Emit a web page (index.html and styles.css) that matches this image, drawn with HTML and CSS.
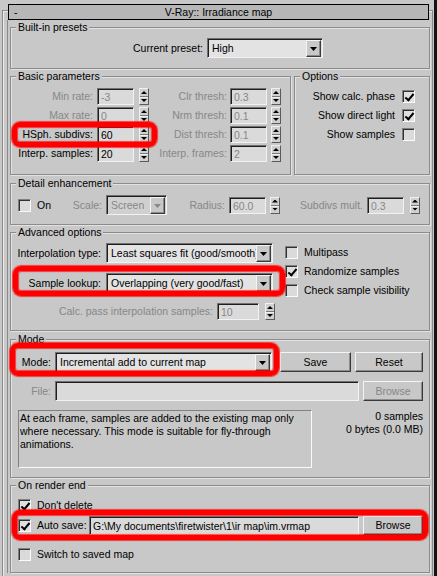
FILE: index.html
```html
<!DOCTYPE html>
<html lang="en">
<head>
<meta charset="utf-8">
<title>V-Ray:: Irradiance map</title>
<link rel="stylesheet" href="styles.css">
</head>
<body>
<div class="screen">
  <div class="outer">
    <div class="titlebar"><span class="minus">-</span><span class="title">V-Ray:: Irradiance map</span><span></span></div>
    <div class="rbody">

      <div class="group g1">
        <div class="legend">Built-in presets</div>
        <div class="row h20">
          <span class="lbl r w196">Current preset:</span>
          <div class="dd w116"><span class="dd-text">High</span><span class="dd-btn"></span></div>
        </div>
      </div>

      <div class="pair">
        <div class="group g2">
          <div class="legend">Basic parameters</div>
          <div class="row h19">
            <span class="lbl r l1 dis">Min rate:</span><span class="field dis">-3</span><span class="spin"></span>
            <span class="lbl r l2 dis">Clr thresh:</span><span class="field dis">0.3</span><span class="spin s4"></span>
          </div>
          <div class="row h19">
            <span class="lbl r l1 dis">Max rate:</span><span class="field dis">0</span><span class="spin"></span>
            <span class="lbl r l2 dis">Nrm thresh:</span><span class="field dis">0.1</span><span class="spin s4"></span>
          </div>
          <div class="row h19">
            <span class="lbl r l1">HSph. subdivs:</span><span class="field">60</span><span class="spin"></span>
            <span class="lbl r l2 dis">Dist thresh:</span><span class="field dis">0.1</span><span class="spin s4"></span>
          </div>
          <div class="row h19">
            <span class="lbl r l1">Interp. samples:</span><span class="field">20</span><span class="spin"></span>
            <span class="lbl r l2 dis">Interp. frames:</span><span class="field dis">2</span><span class="spin s4"></span>
          </div>
        </div>
        <div class="group opts">
          <div class="legend">Options</div>
          <div class="row h19 orow"><span class="lbl">Show calc. phase</span><span class="chk on"></span></div>
          <div class="row h19 orow"><span class="lbl">Show direct light</span><span class="chk on"></span></div>
          <div class="row h19 orow"><span class="lbl">Show samples</span><span class="chk light"></span></div>
        </div>
      </div>

      <div class="group g3">
        <div class="legend">Detail enhancement</div>
        <div class="row h20">
          <span class="chk ml7 light"></span><span class="lbl on-l">On</span>
          <span class="lbl r scale-l dis">Scale:</span>
          <div class="dd w61 off"><span class="dd-text">Screen</span><span class="dd-btn"></span></div>
          <span class="lbl r rad-l dis">Radius:</span><span class="field dis">60.0</span><span class="spin s4"></span>
          <span class="lbl r sub-l dis">Subdivs mult.</span><span class="field dis">0.3</span><span class="spin s6"></span>
        </div>
      </div>

      <div class="group g4">
        <div class="legend">Advanced options</div>
        <div class="adv-left">
          <div class="row h20">
            <span class="lbl r w95">Interpolation type:</span>
            <div class="dd w167"><span class="dd-text">Least squares fit (good/smooth)</span><span class="dd-btn"></span></div>
          </div>
          <div class="row h20 mt10">
            <span class="lbl r w95">Sample lookup:</span>
            <div class="dd w167"><span class="dd-text">Overlapping (very good/fast)</span><span class="dd-btn"></span></div>
          </div>
          <div class="row h17 mt10">
            <span class="lbl r w206 dis">Calc. pass interpolation samples:</span><span class="field w42 dis">10</span><span class="spin s6"></span>
          </div>
        </div>
        <div class="adv-right">
          <div class="row h19"><span class="chk light"></span><span class="lbl ml6">Multipass</span></div>
          <div class="row h19"><span class="chk on"></span><span class="lbl ml6">Randomize samples</span></div>
          <div class="row h19"><span class="chk light"></span><span class="lbl ml6">Check sample visibility</span></div>
        </div>
      </div>

      <div class="group g5">
        <div class="legend">Mode</div>
        <div class="row h20">
          <span class="lbl r w44">Mode:</span>
          <div class="dd w217"><span class="dd-text">Incremental add to current map</span><span class="dd-btn"></span></div>
          <span class="btn w71 ml8">Save</span>
          <span class="btn w68 ml4">Reset</span>
        </div>
        <div class="row h20 mt9">
          <span class="lbl r w44 dis">File:</span>
          <span class="field h20f w304"></span>
          <span class="btn w60 ml4 dis">Browse</span>
        </div>
        <div class="row top mt9">
          <div class="desc">At each frame, samples are added to the existing map only where necessary. This mode is suitable for fly-through animations.</div>
          <div class="info">0 samples<br>0 bytes (0.0 MB)</div>
        </div>
      </div>

      <div class="group g6">
        <div class="legend">On render end</div>
        <div class="row h19"><span class="chk ml7 on"></span><span class="lbl ml6">Don't delete</span></div>
        <div class="row h21">
          <span class="chk ml7 on"></span><span class="lbl as-l">Auto save:</span>
          <span class="field h19f w270">G:\My documents\firetwister\1\ir map\im.vrmap</span>
          <span class="btn h19f w60 ml4">Browse</span>
        </div>
        <div class="row h19 mt9"><span class="chk ml7 light"></span><span class="lbl ml6">Switch to saved map</span></div>
      </div>

    </div>
  </div>

  <div class="hl hl1"></div>
  <div class="hl hl2"></div>
  <div class="hl hl3"></div>
  <div class="hl hl4"></div>
</div>
</body>
</html>
```

FILE: styles.css
```css
* { box-sizing: border-box; }
html, body { margin: 0; padding: 0; }
body {
  background: #c8c8c8;
  font-family: "Liberation Sans", Arial, sans-serif;
  font-size: 10.5px;
  line-height: 13px;
  color: #000;
}
.screen {
  position: relative;
  width: 437px;
  height: 576px;
  overflow: hidden;
  background: #c8c8c8;
  border-right: 3px solid #141414;
  padding-top: 10px;
}
.outer {
  margin: 0 1px 0 2px;
  height: 566px;
  border: 1px solid #8a8a8a;
  border-bottom: 0;
  box-shadow: inset 1px 1px 0 #ececec;
}
.titlebar {
  margin: -7px 3px 0 5px;
  height: 16px;
  border: 1px solid #000;
  background: #b7b7b7;
  display: grid;
  grid-template-columns: 20px 1fr 20px;
  align-items: center;
  line-height: 14px;
}
.minus { padding-left: 5px; }
.title { text-align: center; }
.rbody {
  margin: 0 2px 0 4px;
  border-left: 1px solid #8a8a8a;
  padding: 7px 0 0 2px;
}

/* group boxes */
.group {
  position: relative;
  border: 1px solid #8c8c8c;
  box-shadow: inset 1px 1px 0 #e2e2e2, 1px 1px 0 #e2e2e2;
}
.legend {
  position: absolute;
  top: -7px;
  left: 5px;
  padding: 0 2px;
  background: #c8c8c8;
  line-height: 13px;
  white-space: nowrap;
}
.g1 { height: 42px; padding-top: 10px; }
.pair { display: flex; gap: 3px; margin-top: 7px; }
.g2 { width: 281px; height: 99px; padding-top: 10px; }
.opts { width: 136px; height: 99px; padding-top: 10px; }
.g3 { height: 42px; margin-top: 8px; padding-top: 11px; }
.g4 { height: 99px; margin-top: 7px; padding-top: 10px; display: flex; }
.g5 { height: 139px; margin-top: 8px; padding-top: 12px; }
.g6 { height: 88px; margin-top: 7px; padding-top: 10px; }

/* rows */
.row { display: flex; align-items: center; }
.row.top { align-items: flex-start; }
.h17 { height: 17px; }
.h19 { height: 19px; }
.h20 { height: 20px; }
.h21 { height: 21px; }
.mt9 { margin-top: 9px; }
.mt10 { margin-top: 10px; }
.ml4 { margin-left: 4px; }
.ml6 { margin-left: 6px; }
.ml7 { margin-left: 7px; }
.ml8 { margin-left: 8px; }

.lbl { white-space: nowrap; flex: none; }
.r { text-align: right; padding-right: 4px; }
.dis { color: #878787; }

.w196 { width: 196px; }
.w95 { width: 95px; padding-right: 5px; }
.w206 { width: 206px; }
.w44 { width: 44px; }
.l1 { width: 86px; }
.l2 { width: 81px; padding-right: 3px; }
.on-l { width: 35px; padding-left: 6px; }
.scale-l { width: 40px; }
.rad-l { width: 62px; }
.sub-l { width: 87px; }
.as-l { width: 58px; padding-left: 6px; }

.orow { justify-content: flex-end; padding-right: 14px; }
.orow .lbl { margin-right: 7px; }

.adv-left { width: 262px; flex: none; }
.adv-right { margin-left: 12px; }

/* edit field */
.field {
  flex: none;
  display: block;
  width: 37px;
  height: 17px;
  border: 1px solid;
  border-color: #707070 #f2f2f2 #f2f2f2 #707070;
  box-shadow: inset 1px 1px 0 #1e1e1e;
  background: #dadada;
  padding: 1px 0 0 3px;
  line-height: 14px;
  white-space: nowrap;
  overflow: hidden;
}
.field.w42 { width: 42px; }
.field.w304 { width: 304px; }
.field.w270 { width: 270px; }
.field.h20f { height: 20px; }
.field.h19f { height: 19px; padding-top: 2px; }

/* spinner */
.spin {
  flex: none;
  position: relative;
  width: 10px;
  height: 17px;
  margin-left: 5px;
  border: 1px solid;
  border-color: #f0f0f0 #5a5a5a #5a5a5a #f0f0f0;
  background: linear-gradient(#d0d0d0 0 7px, #7a7a7a 7px 8px, #f0f0f0 8px 9px, #d0d0d0 9px);
}
.spin.s4 { margin-left: 4px; }
.spin.s6 { margin-left: 6px; }
.spin::before,
.spin::after {
  content: "";
  position: absolute;
  left: 1px;
  width: 6px;
  height: 3px;
  background: #000;
}
.spin::before { top: 2px; clip-path: polygon(50% 0, 100% 100%, 0 100%); }
.spin::after { bottom: 2px; clip-path: polygon(0 0, 100% 0, 50% 100%); }

/* dropdown */
.dd {
  flex: none;
  display: flex;
  align-items: center;
  height: 20px;
  border: 1px solid;
  border-color: #707070 #f2f2f2 #f2f2f2 #707070;
  box-shadow: inset 1px 1px 0 #1e1e1e;
  background: #e3e3e3;
  padding: 1px 1px 0 4px;
}
.w116 { width: 116px; }
.w61 { width: 61px; }
.w167 { width: 167px; }
.w217 { width: 217px; }
.dd-text { flex: 1; min-width: 0; overflow: hidden; white-space: nowrap; }
.dd-btn {
  flex: none;
  position: relative;
  width: 15px;
  height: 17px;
  border: 1px solid;
  border-color: #f4f4f4 #3a3a3a #3a3a3a #f4f4f4;
  box-shadow: inset -1px -1px 0 #8a8a8a;
  background: #c8c8c8;
}
.dd-btn::after {
  content: "";
  position: absolute;
  left: 3px;
  top: 6px;
  width: 7px;
  height: 4px;
  background: #000;
  clip-path: polygon(0 0, 100% 0, 50% 100%);
}
.dd.off { background: #d0d0d0; color: #878787; }
.dd.off .dd-btn::after { background: #888; }

/* checkbox */
.chk {
  flex: none;
  position: relative;
  width: 13px;
  height: 13px;
  border: 1px solid;
  border-color: #808080 #fafafa #fafafa #808080;
  box-shadow: inset 1px 1px 0 #303030;
  background: #e0e0e0;
}
.chk.light { background: #dadada; }
.chk.on::after {
  content: "";
  position: absolute;
  left: 4px;
  top: 1px;
  width: 3px;
  height: 7px;
  border: solid #000;
  border-width: 0 2px 2px 0;
  transform: rotate(40deg);
}

/* button */
.btn {
  flex: none;
  height: 20px;
  display: flex;
  align-items: center;
  justify-content: center;
  border: 1px solid;
  border-color: #f4f4f4 #3a3a3a #3a3a3a #f4f4f4;
  box-shadow: inset -1px -1px 0 #8c8c8c;
  background: #c8c8c8;
}
.btn.h19f { height: 19px; }
.w71 { width: 71px; }
.w68 { width: 68px; }
.w60 { width: 60px; }

/* description */
.desc {
  flex: none;
  margin-left: 7px;
  width: 294px;
  height: 58px;
  border: 1px solid;
  border-color: #808080 #fafafa #fafafa #808080;
  padding: 1px 2px 0 1px;
  line-height: 13px;
}
.info {
  flex: 1;
  text-align: right;
  padding-right: 6px;
  line-height: 13px;
}

/* red highlight marks */
.hl {
  position: absolute;
  border: 5px solid #ff0000;
  border-radius: 8px;
  box-shadow: 0 0 1px 1px rgba(255, 0, 0, 0.7), inset 0 0 1px 1px rgba(255, 0, 0, 0.7);
  pointer-events: none;
}
.hl1 { left: 12px; top: 122px; width: 145px; height: 25px; }
.hl2 { left: 13px; top: 266px; width: 272px; height: 30px; }
.hl3 { left: 10px; top: 343px; width: 269px; height: 33px; }
.hl4 { left: 12px; top: 510px; width: 416px; height: 30px; }
```
